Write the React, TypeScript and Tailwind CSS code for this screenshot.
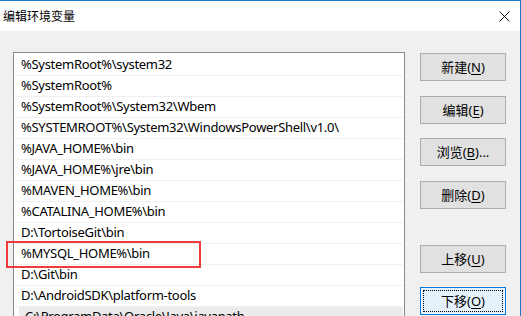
import React from 'react'

const paths = [
  '%SystemRoot%\\system32',
  '%SystemRoot%',
  '%SystemRoot%\\System32\\Wbem',
  '%SYSTEMROOT%\\System32\\WindowsPowerShell\\v1.0\\',
  '%JAVA_HOME%\\bin',
  '%JAVA_HOME%\\jre\\bin',
  '%MAVEN_HOME%\\bin',
  '%CATALINA_HOME%\\bin',
  'D:\\TortoiseGit\\bin',
  '%MYSQL_HOME%\\bin',
  'D:\\Git\\bin',
  'D:\\AndroidSDK\\platform-tools',
  'C:\\ProgramData\\Oracle\\Java\\javapath',
]

const font = { fontFamily: '"Noto Sans", "Noto Sans CJK SC", sans-serif' }

const DlgButton = ({
  label,
  hotkey,
  suffix = '',
  className = '',
  focused = false,
}: {
  label: string
  hotkey: string
  suffix?: string
  className?: string
  focused?: boolean
}) => (
  <button
    className={
      'relative w-[86px] h-[28px] flex items-center justify-center text-[13px] text-black leading-none ' +
      (focused
        ? 'bg-[#e5f1fb] border border-[#0078d7] '
        : 'bg-[#e1e1e1] border border-[#adadad] ') +
      className
    }
  >
    {focused && (
      <span className="absolute inset-[2px] border border-dotted border-black" />
    )}
    <span className="relative">
      {label}(<span className="underline underline-offset-2">{hotkey}</span>){suffix}
    </span>
  </button>
)

export default function App() {
  return (
    <div
      className="w-[521px] h-[316px] overflow-hidden bg-[#f0f0f0] border-t border-r border-[#1979ca] flex flex-col"
      style={font}
    >
      <div className="h-[30px] bg-white flex items-center justify-between shrink-0">
        <span className="pl-[3px] pt-px text-[12px] text-black">编辑环境变量</span>
        <svg width="11" height="11" viewBox="0 0 11 11" className="mr-[10px]">
          <path d="M0.5 0.5 L10.5 10.5 M10.5 0.5 L0.5 10.5" stroke="#111" strokeWidth="1" />
        </svg>
      </div>
      <div className="flex flex-row flex-1 min-h-0">
        <div className="relative ml-[13px] mt-[21px] w-[392px] h-[300px] bg-white border border-[#828790] pt-[2px] px-px">
          {paths.map((p, i) => (
            <div
              key={p}
              className="h-[21px] border-b border-[#f0f0f0] flex items-center text-[13px] tracking-[-0.3px] text-black whitespace-nowrap overflow-hidden"
            >
              <div
                className={
                  'h-full flex items-center pl-[6px] flex-1 ' +
                  (i === paths.length - 1 ? 'ml-[4px] pl-[2px] bg-[#ebebeb]' : '')
                }
              >
                {p}
              </div>
            </div>
          ))}
          <div className="absolute left-[-8px] top-[188px] w-[195px] h-[27px] border-2 border-[#ee3b3b]" />
        </div>
        <div className="ml-[15px] mt-[22px] flex flex-col">
          <DlgButton label="新建" hotkey="N" />
          <DlgButton label="编辑" hotkey="E" className="mt-[15px]" />
          <DlgButton label="浏览" hotkey="B" suffix="..." className="mt-[14px]" />
          <DlgButton label="删除" hotkey="D" className="mt-[15px]" />
          <DlgButton label="上移" hotkey="U" className="mt-[36px]" />
          <DlgButton label="下移" hotkey="O" className="mt-[14px]" focused />
        </div>
      </div>
    </div>
  )
}
